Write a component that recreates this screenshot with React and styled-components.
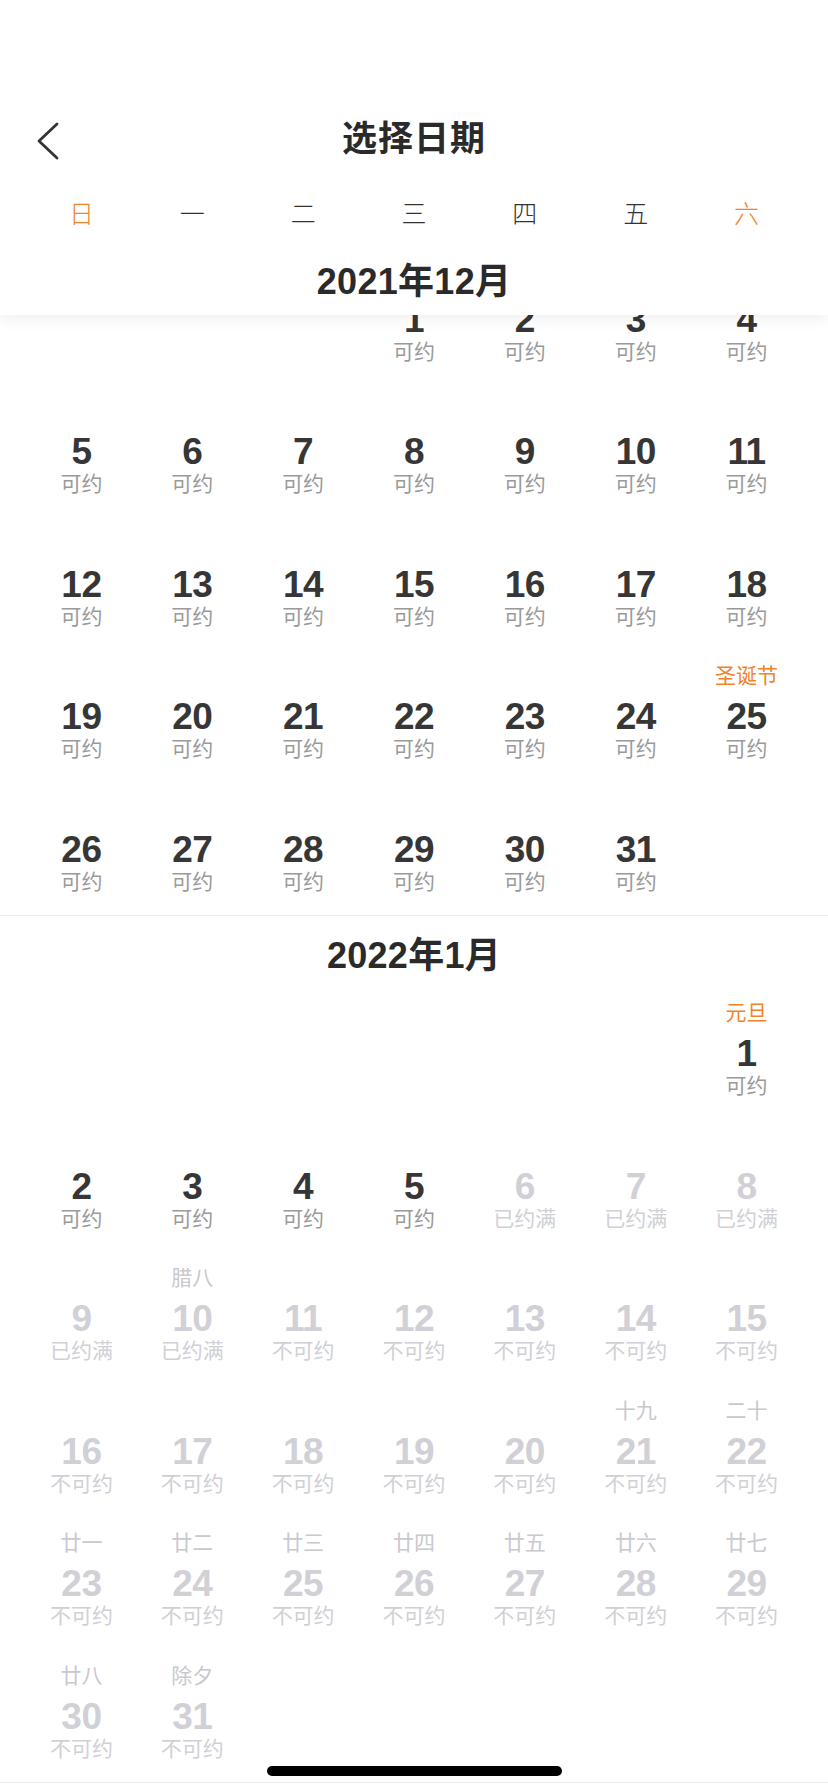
import React from "react";
import styled, { createGlobalStyle } from "styled-components";

const GlobalStyle = createGlobalStyle`
  html, body {
    margin: 0;
    padding: 0;
    background: #fff;
  }
  body {
    font-family: "Liberation Sans", "Noto Sans CJK SC", sans-serif;
    color: #333;
    -webkit-font-smoothing: antialiased;
  }
`;

const ORANGE = "#f0832c";
const DIM = "#d0d0d6";

const Page = styled.div`
  width: 828px;
  min-height: 1792px;
  background: #fff;
  overflow: hidden;
  position: relative;
`;

// fixed top: status bar + nav + week days + current month
const TopBar = styled.header`
  position: relative;
  z-index: 2;
  background: #fff;
  box-shadow: 0 5px 14px rgba(0, 0, 0, 0.06);
`;

const StatusSpace = styled.div`
  height: 86px;
`;

const Nav = styled.div`
  height: 98px;
  display: grid;
  grid-template-columns: 1fr auto 1fr;
  align-items: center;
`;

const BackBtn = styled.button`
  justify-self: start;
  margin-left: 36px;
  padding: 0;
  border: 0;
  background: none;
  display: flex;
  margin-top: 6px;
`;

const Title = styled.h1`
  margin: 0;
  font-family: "Noto Sans CJK SC", sans-serif;
  font-size: 35px;
  font-weight: 600;
  color: #2a2a2a;
  letter-spacing: 1px;
`;

const Grid7 = styled.div`
  display: grid;
  grid-template-columns: repeat(7, 1fr);
  padding: 0 26px;
`;

const WeekRow = styled(Grid7)`
  height: 56px;
  align-items: center;
`;

const WeekDay = styled.span`
  text-align: center;
  font-family: "Noto Sans CJK SC", sans-serif;
  font-size: 25px;
  font-weight: 300;
  color: ${(p) => (p.$weekend ? ORANGE : "#333")};
`;

const MonthTitle = styled.h2`
  margin: 0;
  height: ${(p) => p.$h}px;
  display: flex;
  align-items: center;
  justify-content: center;
  font-family: "Liberation Sans", "Noto Sans CJK SC", sans-serif;
  font-size: 36px;
  font-weight: 700;
  letter-spacing: 0.3px;
  color: #2a2a2a;
`;

// scrolled content, slid under the top bar
const Scroller = styled.main`
  position: relative;
  z-index: 1;
  margin-top: -62.5px;
`;

const Divider = styled.div`
  height: 1px;
  background: #ebebee;
`;

const Cell = styled.div`
  height: 132.5px;
  padding-top: 8px;
  box-sizing: border-box;
  display: flex;
  flex-direction: column;
  align-items: center;
`;

const Tag = styled.span`
  height: 37px;
  line-height: 32px;
  font-family: "Noto Sans CJK SC", sans-serif;
  font-size: 21px;
  color: ${(p) => (p.$festival ? ORANGE : "#c9c9ce")};
  white-space: nowrap;
`;

const Num = styled.span`
  height: 43px;
  line-height: 43px;
  font-family: "Liberation Sans", sans-serif;
  font-size: 37px;
  font-weight: 700;
  letter-spacing: -0.5px;
  color: ${(p) => (p.$off ? DIM : "#363636")};
`;

const State = styled.span`
  height: 18px;
  line-height: 18px;
  font-family: "Noto Sans CJK SC", sans-serif;
  font-size: 21px;
  color: ${(p) => (p.$off ? DIM : "#9a9a9a")};
  white-space: nowrap;
`;

const HomeBar = styled.div`
  position: fixed;
  left: 267px;
  bottom: 16px;
  width: 295px;
  height: 10px;
  border-radius: 5px;
  background: #000;
  z-index: 5;
`;

const weekDays = ["日", "一", "二", "三", "四", "五", "六"];

const decTags = { 25: { text: "圣诞节", festival: true } };
const janTags = {
  1: { text: "元旦", festival: true },
  10: { text: "腊八" },
  21: { text: "十九" },
  22: { text: "二十" },
  23: { text: "廿一" },
  24: { text: "廿二" },
  25: { text: "廿三" },
  26: { text: "廿四" },
  27: { text: "廿五" },
  28: { text: "廿六" },
  29: { text: "廿七" },
  30: { text: "廿八" },
  31: { text: "除夕" },
};

const janState = (d) => {
  if (d <= 5) return "可约";
  if (d <= 10) return "已约满";
  return "不可约";
};

function buildMonth(offset, days, tags, stateOf) {
  const cells = [];
  for (let i = 0; i < offset; i++) cells.push(null);
  for (let d = 1; d <= days; d++) {
    cells.push({ day: d, tag: tags[d], state: stateOf(d) });
  }
  return cells;
}

const december = buildMonth(3, 31, decTags, () => "可约");
const january = buildMonth(6, 31, janTags, janState);

const DayCell = ({ cell }) => {
  if (!cell) return <Cell />;
  const off = cell.state !== "可约";
  return (
    <Cell>
      <Tag $festival={cell.tag && cell.tag.festival}>
        {cell.tag ? cell.tag.text : ""}
      </Tag>
      <Num $off={off}>{cell.day}</Num>
      <State $off={off}>{cell.state}</State>
    </Cell>
  );
};

const MonthGrid = ({ cells }) => (
  <Grid7>
    {cells.map((c, i) => (
      <DayCell key={i} cell={c} />
    ))}
  </Grid7>
);

export default function App() {
  return (
    <Page>
      <GlobalStyle />
      <TopBar>
        <StatusSpace />
        <Nav>
          <BackBtn aria-label="back">
            <svg width="24" height="44" viewBox="0 0 24 44">
              <polyline
                points="21,8 3,25 21,42"
                fill="none"
                stroke="#333"
                strokeWidth="2.8"
                strokeLinecap="round"
                strokeLinejoin="round"
              />
            </svg>
          </BackBtn>
          <Title>选择日期</Title>
          <span />
        </Nav>
        <WeekRow>
          {weekDays.map((w, i) => (
            <WeekDay key={w} $weekend={i === 0 || i === 6}>
              {w}
            </WeekDay>
          ))}
        </WeekRow>
        <MonthTitle $h={75}>2021年12月</MonthTitle>
      </TopBar>

      <Scroller>
        <MonthGrid cells={december} />
        <Divider />
        <MonthTitle $h={71}>2022年1月</MonthTitle>
        <MonthGrid cells={january} />
        <Divider />
      </Scroller>

      <HomeBar />
    </Page>
  );
}
